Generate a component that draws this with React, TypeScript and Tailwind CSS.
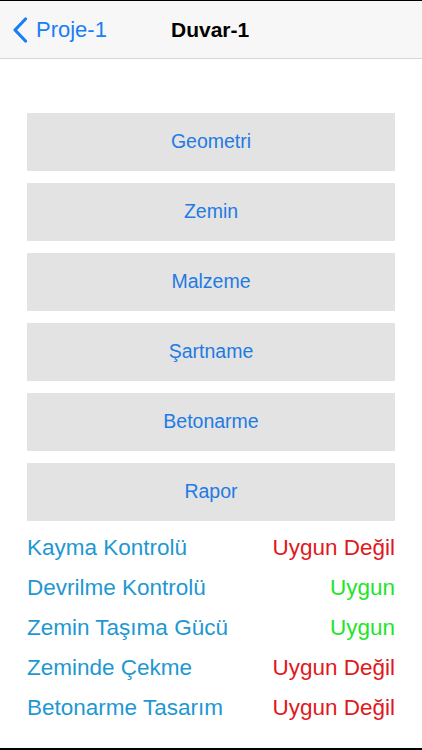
const buttons = ["Geometri", "Zemin", "Malzeme", "Şartname", "Betonarme", "Rapor"];

const checks = [
  { label: "Kayma Kontrolü", ok: false },
  { label: "Devrilme Kontrolü", ok: true },
  { label: "Zemin Taşıma Gücü", ok: true },
  { label: "Zeminde Çekme", ok: false },
  { label: "Betonarme Tasarım", ok: false },
];

export default function App() {
  return (
    <div
      className="flex flex-col w-[422px] h-[750px] bg-white border-t border-black border-b-2 overflow-hidden"
      style={{ fontFamily: '"Liberation Sans", Arial, sans-serif' }}
    >
      <header className="relative flex items-center h-[58px] bg-[#f7f7f7] border-b border-[#d6d6d6]">
        <div className="flex items-center pl-[12px] text-[#1a7ef5]">
          <svg width="16" height="26" viewBox="0 0 16 26" fill="none">
            <path d="M13.5 2 L3 13 L13.5 24" stroke="#1a7ef5" strokeWidth="3.2" strokeLinecap="round" strokeLinejoin="round" />
          </svg>
          <span className="ml-[8px] text-[22px]">Proje-1</span>
        </div>
        <h1 className="absolute left-[171px] text-[21px] font-bold text-black">Duvar-1</h1>
      </header>

      <main className="flex flex-col px-[27px] pt-[54px]">
        <div className="flex flex-col gap-[12px]">
          {buttons.map((b) => (
            <button
              key={b}
              className="h-[58px] w-full bg-[#e3e3e3] text-[#1f7be3] text-[19.5px]"
            >
              {b}
            </button>
          ))}
        </div>

        <ul className="flex flex-col mt-[7px]">
          {checks.map((c) => (
            <li key={c.label} className="flex items-center justify-between h-[40px] text-[22.5px]">
              <span className="text-[#1e98d2]">{c.label}</span>
              <span className={c.ok ? "text-[#22e52a]" : "text-[#e01820]"}>
                {c.ok ? "Uygun" : "Uygun Değil"}
              </span>
            </li>
          ))}
        </ul>
      </main>
    </div>
  );
}
